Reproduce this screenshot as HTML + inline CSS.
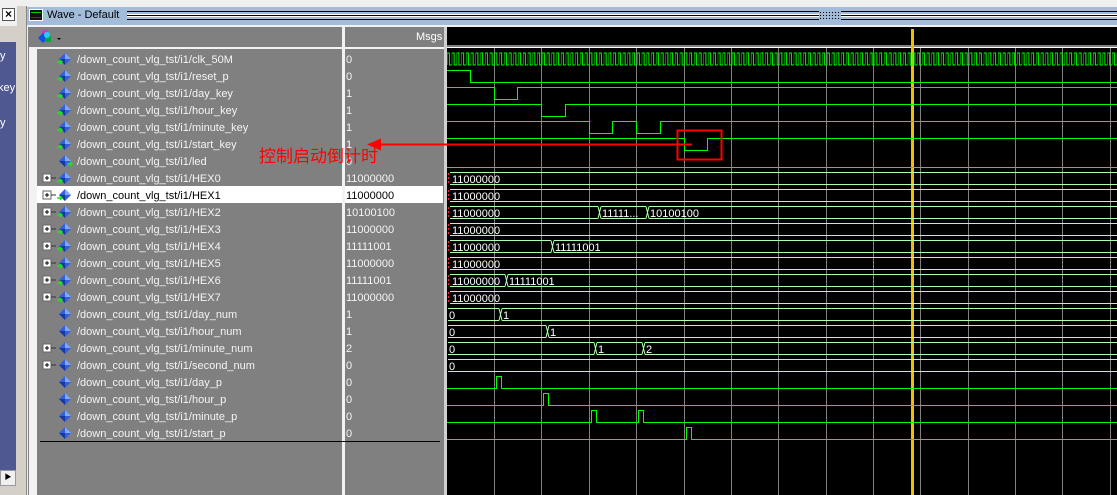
<!DOCTYPE html>
<html><head><meta charset="utf-8"><style>
*{margin:0;padding:0;box-sizing:border-box}
body{width:1117px;height:495px;overflow:hidden;background:#d4d0c8;position:relative;font-family:"Liberation Sans","Noto Sans CJK SC",sans-serif;font-size:11px}
.a{position:absolute}
.n{position:absolute;left:77px;color:#f4f4f4;white-space:nowrap;line-height:14px;margin-top:1px}
.v{position:absolute;left:346px;color:#f4f4f4;line-height:14px;margin-top:1px}
</style></head><body>
<div class="a" style="left:0;top:0;width:1117px;height:6px;background:#f0f0f0"></div>
<div class="a" style="left:0;top:6px;width:17px;height:20px;background:#f0f0f0"></div>
<div class="a" style="left:2px;top:8px;width:13px;height:13px;border:1px solid #555;background:#fff;font-size:12px;line-height:11px;text-align:center;font-weight:bold">×</div>
<div class="a" style="left:0;top:42px;width:16px;height:428px;background:#4f5890;color:#fff;font-size:11px;line-height:12px">
<div style="position:absolute;top:8px;left:0">y</div><div style="position:absolute;top:40px;left:-2px">key</div><div style="position:absolute;top:75px;left:0">y</div></div>
<div class="a" style="left:0;top:470px;width:16px;height:16px;background:#f0f0f0;border:1px solid #999;font-size:7px;text-align:center;line-height:14px">▶</div>
<div class="a" style="left:26px;top:6px;width:1091px;height:489px;background:#f0f0f0;border-left:1px solid #888"></div>
<div class="a" style="left:27px;top:7px;width:1090px;height:18px;background:#a3bcd9"></div>
<div class="a" style="left:29px;top:9px;width:14px;height:12px;background:#111;border:1px solid #fff"></div>
<div class="a" style="left:31px;top:12px;width:10px;height:6px;border-top:1px solid #0c0;border-bottom:1px solid #70f"></div>
<div class="a" style="left:47px;top:9px;color:#000;font-size:11px">Wave - Default</div>
<div class="a" style="left:127px;top:11px;width:990px;height:9px;border-top:1px solid #000;border-bottom:1px solid #000;background:linear-gradient(#a3bcd9 0 2px,#fff 2px 3px,#000 3px 4px,#fff 4px 5px,#a3bcd9 5px)"></div>
<div class="a" style="left:819px;top:11px;width:22px;height:9px;background:#a3bcd9;background-image:radial-gradient(#000 0.7px,transparent 0.8px);background-size:3px 3px"></div>
<div class="a" style="left:28px;top:27px;width:316px;height:468px;background:#808080"></div>
<div class="a" style="left:29px;top:47px;width:8px;height:448px;background:#f2f2f2"></div>
<div class="a" style="left:29px;top:47px;width:315px;height:2px;background:#f2f2f2"></div>
<div class="a" style="left:342px;top:27px;width:3px;height:468px;background:#f2f2f2"></div>
<div class="a" style="left:345px;top:27px;width:99px;height:468px;background:#808080"></div>
<div class="a" style="left:345px;top:47px;width:99px;height:2px;background:#f2f2f2"></div>
<div class="a" style="left:444px;top:27px;width:3px;height:468px;background:#d0d0d0"></div>
<div class="a" style="left:416px;top:31px;color:#fff">Msgs</div>
<svg class="a" style="left:36px;top:28px" width="32" height="18"><path d="M6 2 L12 2 L12 8 L6 8Z" fill="#c040c0"/><path d="M2 10 L7 5 L12 10 L7 15Z" fill="#1050e0"/><rect x="9" y="8" width="6" height="6" fill="#10a040"/><circle cx="11" cy="7" r="3" fill="#20d0f0"/><path d="M21 10 L25 10 L23 12Z" fill="#000"/></svg>
<div class="a" style="left:37px;top:186px;width:305px;height:17px;background:#fff"></div>
<div class="a" style="left:345px;top:186px;width:98px;height:17px;background:#fff"></div>
<div class="a" style="left:40px;top:441px;width:400px;height:1px;background:#000"></div>
<svg class="a" style="left:0;top:0" width="447" height="495">
<defs><g id="ic"><path d="M-6 0 L0 -6 L6 0 L0 6Z" fill="#3060e0"/><path d="M0 -6 L6 0 L0 0Z" fill="#80a8ff"/><path d="M-6 0 L0 6 L0 0Z" fill="#1838a0"/></g>
<g id="ar"><path d="M-8 3 H-3 M-5 1 L-3 3 L-5 5" stroke="#20e020" stroke-width="1.5" fill="none"/></g>
<g id="pl"><rect x="-4" y="-4" width="8" height="8" fill="#fff" stroke="#666"/><path d="M-2 0H2M0 -2V2" stroke="#000"/><path d="M4 0H9" stroke="#333"/></g></defs>
<g transform="translate(65,59)"><use href="#ic"/><use href="#ar"/></g>
<g transform="translate(65,76)"><use href="#ic"/><use href="#ar"/></g>
<g transform="translate(65,93)"><use href="#ic"/><use href="#ar"/></g>
<g transform="translate(65,110)"><use href="#ic"/><use href="#ar"/></g>
<g transform="translate(65,127)"><use href="#ic"/><use href="#ar"/></g>
<g transform="translate(65,144)"><use href="#ic"/><use href="#ar"/></g>
<g transform="translate(65,161)"><use href="#ic"/><path d="M2 3 H7 M5 1 L7 3 L5 5" stroke="#20e020" stroke-width="1.5" fill="none"/></g>
<g transform="translate(65,178)"><use href="#ic"/><use href="#ar"/></g><g transform="translate(47,178)"><use href="#pl"/></g>
<g transform="translate(65,195)"><use href="#ic"/><use href="#ar"/></g><g transform="translate(47,195)"><use href="#pl"/></g>
<g transform="translate(65,212)"><use href="#ic"/><use href="#ar"/></g><g transform="translate(47,212)"><use href="#pl"/></g>
<g transform="translate(65,229)"><use href="#ic"/><use href="#ar"/></g><g transform="translate(47,229)"><use href="#pl"/></g>
<g transform="translate(65,246)"><use href="#ic"/><use href="#ar"/></g><g transform="translate(47,246)"><use href="#pl"/></g>
<g transform="translate(65,263)"><use href="#ic"/><use href="#ar"/></g><g transform="translate(47,263)"><use href="#pl"/></g>
<g transform="translate(65,280)"><use href="#ic"/><use href="#ar"/></g><g transform="translate(47,280)"><use href="#pl"/></g>
<g transform="translate(65,297)"><use href="#ic"/><use href="#ar"/></g><g transform="translate(47,297)"><use href="#pl"/></g>
<g transform="translate(65,314)"><use href="#ic"/></g>
<g transform="translate(65,331)"><use href="#ic"/></g>
<g transform="translate(65,348)"><use href="#ic"/></g><g transform="translate(47,348)"><use href="#pl"/></g>
<g transform="translate(65,365)"><use href="#ic"/></g><g transform="translate(47,365)"><use href="#pl"/></g>
<g transform="translate(65,382)"><use href="#ic"/></g>
<g transform="translate(65,399)"><use href="#ic"/></g>
<g transform="translate(65,416)"><use href="#ic"/></g>
<g transform="translate(65,433)"><use href="#ic"/></g>
</svg>
<div class="n" style="top:52px">/down_count_vlg_tst/i1/clk_50M</div><div class="v" style="top:52px">0</div>
<div class="n" style="top:69px">/down_count_vlg_tst/i1/reset_p</div><div class="v" style="top:69px">0</div>
<div class="n" style="top:86px">/down_count_vlg_tst/i1/day_key</div><div class="v" style="top:86px">1</div>
<div class="n" style="top:103px">/down_count_vlg_tst/i1/hour_key</div><div class="v" style="top:103px">1</div>
<div class="n" style="top:120px">/down_count_vlg_tst/i1/minute_key</div><div class="v" style="top:120px">1</div>
<div class="n" style="top:137px">/down_count_vlg_tst/i1/start_key</div><div class="v" style="top:137px">1</div>
<div class="n" style="top:154px">/down_count_vlg_tst/i1/led</div><div class="v" style="top:154px">0</div>
<div class="n" style="top:171px">/down_count_vlg_tst/i1/HEX0</div><div class="v" style="top:171px">11000000</div>
<div class="n" style="top:188px;color:#000">/down_count_vlg_tst/i1/HEX1</div><div class="v" style="top:188px;color:#000">11000000</div>
<div class="n" style="top:205px">/down_count_vlg_tst/i1/HEX2</div><div class="v" style="top:205px">10100100</div>
<div class="n" style="top:222px">/down_count_vlg_tst/i1/HEX3</div><div class="v" style="top:222px">11000000</div>
<div class="n" style="top:239px">/down_count_vlg_tst/i1/HEX4</div><div class="v" style="top:239px">11111001</div>
<div class="n" style="top:256px">/down_count_vlg_tst/i1/HEX5</div><div class="v" style="top:256px">11000000</div>
<div class="n" style="top:273px">/down_count_vlg_tst/i1/HEX6</div><div class="v" style="top:273px">11111001</div>
<div class="n" style="top:290px">/down_count_vlg_tst/i1/HEX7</div><div class="v" style="top:290px">11000000</div>
<div class="n" style="top:307px">/down_count_vlg_tst/i1/day_num</div><div class="v" style="top:307px">1</div>
<div class="n" style="top:324px">/down_count_vlg_tst/i1/hour_num</div><div class="v" style="top:324px">1</div>
<div class="n" style="top:341px">/down_count_vlg_tst/i1/minute_num</div><div class="v" style="top:341px">2</div>
<div class="n" style="top:358px">/down_count_vlg_tst/i1/second_num</div><div class="v" style="top:358px">0</div>
<div class="n" style="top:375px">/down_count_vlg_tst/i1/day_p</div><div class="v" style="top:375px">0</div>
<div class="n" style="top:392px">/down_count_vlg_tst/i1/hour_p</div><div class="v" style="top:392px">0</div>
<div class="n" style="top:409px">/down_count_vlg_tst/i1/minute_p</div><div class="v" style="top:409px">0</div>
<div class="n" style="top:426px">/down_count_vlg_tst/i1/start_p</div><div class="v" style="top:426px">0</div>
<svg class="a" style="left:0;top:0" width="1117" height="495" font-family="Liberation Sans" font-size="11">
<defs><pattern id="clk" x="447" y="0" width="4.75" height="495" patternUnits="userSpaceOnUse"><path d="M0 65 V53 H2.4 V65 H4.75" stroke="#00ff00" fill="none" stroke-width="1"/></pattern></defs>
<rect x="447" y="27" width="670" height="468" fill="#000"/>
<rect x="447" y="45" width="670" height="2" fill="#808080"/>
<rect x="447" y="47" width="670" height="1" fill="#fff"/>
<g stroke="#808080" stroke-width="1">
<path d="M494.5 48V495M541.5 48V495M589.5 48V495M636.5 48V495M684.5 48V495M731.5 48V495M778.5 48V495M826.5 48V495M873.5 48V495M920.5 48V495M968.5 48V495M1015.5 48V495M1062.5 48V495M1110.5 48V495"/></g>
<rect x="911" y="29" width="3" height="466" fill="#f0c000"/>
<rect x="447" y="52" width="670" height="14" fill="url(#clk)"/>
<g stroke="#00ff00" fill="none" stroke-width="1">
<path d="M447 70.5H470.5V82.5H1117"/>
<path d="M447 87.5H494.5V99.5H517.5V87.5H1117"/>
<path d="M447 104.5H541.5V116.5H565.5V104.5H1117"/>
<path d="M447 121.5H589.5V133.5H612.5V121.5H636.5V133.5H660.5V121.5H1117"/>
<path d="M447 138.5H684.5V150.5H707.5V138.5H1117"/>
<path d="M447 167.5H1117"/>
<path d="M447 388.5H496.5V376.5H501.5V388.5H1117"/>
<path d="M447 405.5H543.5V393.5H548.5V405.5H1117"/>
<path d="M447 422.5H591.5V410.5H596.5V422.5H638.5V410.5H643.5V422.5H1117"/>
<path d="M447 439.5H686.5V427.5H691.5V439.5H1117"/>
</g>
<g stroke="#b0ffb0" fill="none" stroke-width="1">
<path d="M450 172.5H1117M450 184.5H1117M450 189.5H1117M450 201.5H1117"/>
<path d="M450 206.5H598M601 206.5H646M649 206.5H1117M450 218.5H598M601 218.5H646M649 218.5H1117M598 206.5L601 218.5M598 218.5L601 206.5M646 206.5L649 218.5M646 218.5L649 206.5"/>
<path d="M450 223.5H1117M450 235.5H1117"/>
<path d="M450 240.5H551M554 240.5H1117M450 252.5H551M554 252.5H1117M551 240.5L554 252.5M551 252.5L554 240.5"/>
<path d="M450 257.5H1117M450 269.5H1117"/>
<path d="M450 274.5H505M508 274.5H1117M450 286.5H505M508 286.5H1117M505 274.5L508 286.5M505 286.5L508 274.5"/>
<path d="M450 291.5H1117M450 303.5H1117"/>
<path d="M448 308.5H499M502 308.5H1117M448 320.5H499M502 320.5H1117M499 308.5L502 320.5M499 320.5L502 308.5"/>
<path d="M448 325.5H546M549 325.5H1117M448 337.5H546M549 337.5H1117M546 325.5L549 337.5M546 337.5L549 325.5"/>
<path d="M448 342.5H594M597 342.5H642M645 342.5H1117M448 354.5H594M597 354.5H642M645 354.5H1117M594 342.5L597 354.5M594 354.5L597 342.5M642 342.5L645 354.5M642 354.5L645 342.5"/>
<path d="M448 359.5H1117M448 371.5H1117"/>
</g>
<g stroke="#ff2020" stroke-width="1"><path d="M448.5 173V184M448.5 190V201M448.5 207V218M448.5 224V235M448.5 241V252M448.5 258V269M448.5 275V286M448.5 292V303" stroke-dasharray="2 2"/></g>
<g fill="#fff">
<text x="452" y="183">11000000</text><text x="452" y="200">11000000</text>
<text x="452" y="217">11000000</text><text x="602" y="217">11111...</text><text x="650" y="217">10100100</text>
<text x="452" y="234">11000000</text>
<text x="452" y="251">11000000</text><text x="555" y="251">11111001</text>
<text x="452" y="268">11000000</text>
<text x="452" y="285">11000000</text><text x="509" y="285">11111001</text>
<text x="452" y="302">11000000</text>
<text x="449" y="319">0</text><text x="503" y="319">1</text>
<text x="449" y="336">0</text><text x="550" y="336">1</text>
<text x="449" y="353">0</text><text x="598" y="353">1</text><text x="646" y="353">2</text>
<text x="449" y="370">0</text>
</g>
<rect x="677.5" y="130.5" width="44" height="29" fill="none" stroke="#ff0000" stroke-width="2"/>
<path d="M378 144.5H692" stroke="#ff0000" stroke-width="2"/>
<path d="M367 144.5L381 138.5L381 150.5Z" fill="#ff0000"/>
<text x="259" y="162" fill="#ff0000" font-size="17" font-family="Noto Sans CJK SC,sans-serif">控制启动倒计时</text>
</svg>
</body></html>
